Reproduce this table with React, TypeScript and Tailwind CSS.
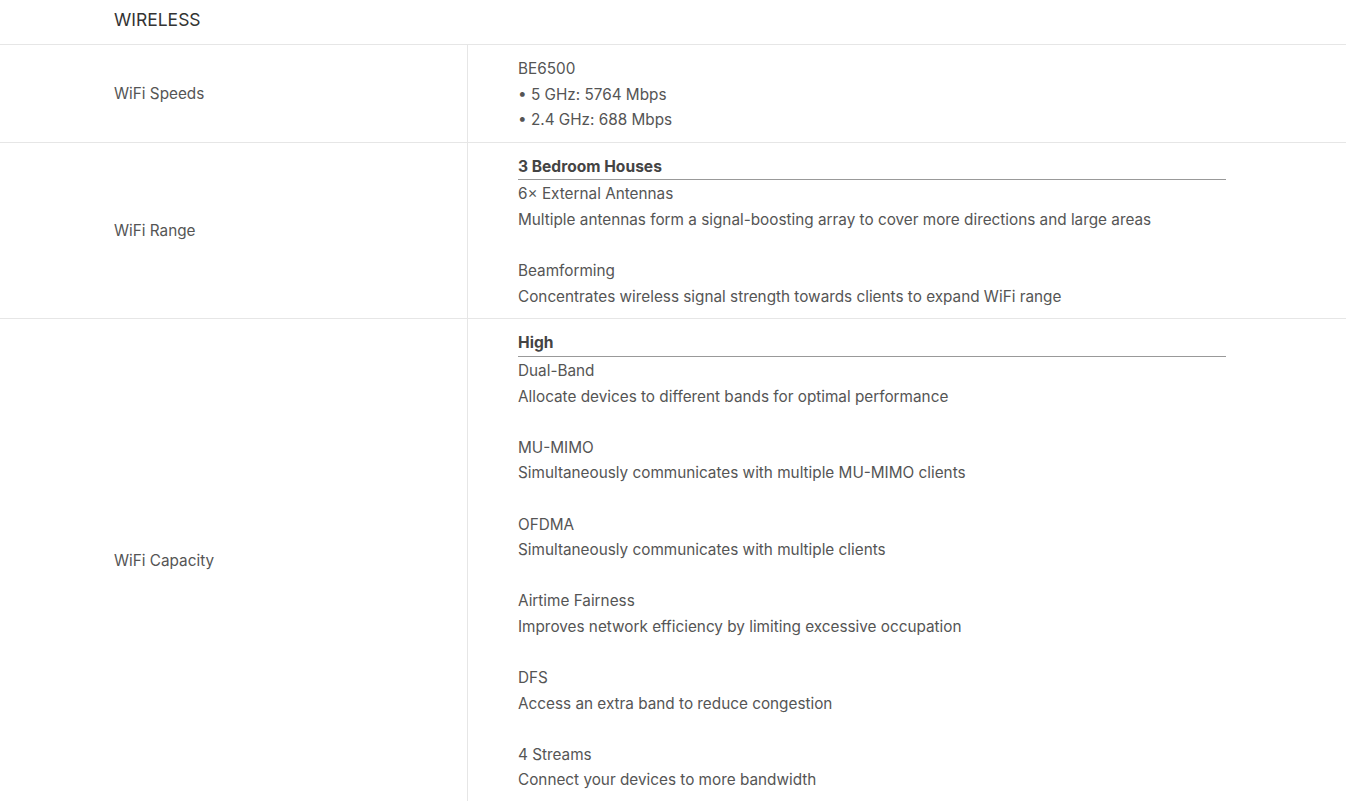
const rows = [
  {
    label: "WiFi Speeds",
    lines: ["BE6500", "• 5 GHz: 5764 Mbps", "• 2.4 GHz: 688 Mbps"],
  },
];

const range = {
  title: "3 Bedroom Houses",
  items: [
    ["6× External Antennas", "Multiple antennas form a signal-boosting array to cover more directions and large areas"],
    ["Beamforming", "Concentrates wireless signal strength towards clients to expand WiFi range"],
  ],
};

const capacity = {
  title: "High",
  items: [
    ["Dual-Band", "Allocate devices to different bands for optimal performance"],
    ["MU-MIMO", "Simultaneously communicates with multiple MU-MIMO clients"],
    ["OFDMA", "Simultaneously communicates with multiple clients"],
    ["Airtime Fairness", "Improves network efficiency by limiting excessive occupation"],
    ["DFS", "Access an extra band to reduce congestion"],
    ["4 Streams", "Connect your devices to more bandwidth"],
  ],
};

function Feature({ title, items }: { title: string; items: string[][] }) {
  return (
    <div className="w-[708px]">
      <div className="font-bold text-[15.6px] text-[#444] border-b border-[#999] mb-px">{title}</div>
      {items.map(([name, desc], i) => (
        <div key={name}>
          {i > 0 && <div className="h-[25.6px]" />}
          <div>{name}</div>
          <div>{desc}</div>
        </div>
      ))}
    </div>
  );
}

function Row({ label, children }: { label: string; children: React.ReactNode }) {
  return (
    <div className="flex border-b border-[#e6e6e6]">
      <div className="w-[468px] shrink-0 flex items-center pl-[114px] border-r border-[#e6e6e6]">{label}</div>
      <div className="flex-1 pl-[50px] pt-[11px] pb-[9px]">{children}</div>
    </div>
  );
}

export default function App() {
  return (
    <div className="bg-white min-h-screen text-[15.3px] leading-[25.6px] text-[#555] font-['Inter',sans-serif]">
      <div className="h-[45px] flex items-center pl-[114px] text-[17.5px] text-[#333] border-b border-[#e6e6e6] pb-[5px]">
        WIRELESS
      </div>
      {rows.map((r) => (
        <Row key={r.label} label={r.label}>
          {r.lines.map((l) => (
            <div key={l}>{l}</div>
          ))}
        </Row>
      ))}
      <Row label="WiFi Range">
        <Feature {...range} />
      </Row>
      <Row label="WiFi Capacity">
        <Feature {...capacity} />
      </Row>
    </div>
  );
}
